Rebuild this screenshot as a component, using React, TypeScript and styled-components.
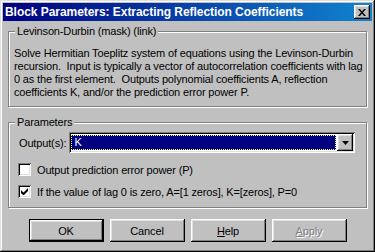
import React from "react";
import styled, { createGlobalStyle } from "styled-components";

const GlobalStyle = createGlobalStyle`
  html, body {
    margin: 0;
    padding: 0;
    background: #c0c0c0;
  }
  body {
    font-family: "Liberation Sans", Arial, sans-serif;
    font-size: 11px;
    letter-spacing: -0.15px;
    color: #000;
  }
`;

const raised = `
  box-shadow: inset -1px -1px #000, inset 1px 1px #fff, inset -2px -2px #808080, inset 2px 2px #dfdfdf;
`;

const sunken = `
  box-shadow: inset 1px 1px #808080, inset -1px -1px #fff, inset 2px 2px #000, inset -2px -2px #dfdfdf;
`;

const Window = styled.div`
  width: 375px;
  height: 252px;
  box-sizing: border-box;
  padding: 3px;
  background: #c0c0c0;
  box-shadow: inset -1px -1px #000, inset 1px 1px #dfdfdf, inset -2px -2px #808080, inset 2px 2px #fff;
  display: flex;
  flex-direction: column;
`;

const TitleBar = styled.div`
  height: 18px;
  display: flex;
  align-items: center;
  padding: 0 2px;
  background: linear-gradient(to right, #000080, #1084d0);
`;

const Title = styled.span`
  color: #fff;
  font-weight: bold;
  font-size: 12px;
  letter-spacing: -0.05px;
  white-space: nowrap;
`;

const CloseButton = styled.button`
  margin-left: auto;
  width: 16px;
  height: 14px;
  padding: 0;
  border: 0;
  background: #c0c0c0;
  ${raised}
  display: flex;
  align-items: center;
  justify-content: center;
`;

const Content = styled.div`
  display: flex;
  flex-direction: column;
  padding: 0 5px;
`;

const GroupBox = styled.fieldset<{ $top: number; $pad: string }>`
  margin: ${(p) => p.$top}px 0 0;
  padding: ${(p) => p.$pad};
  border: 1px solid #808080;
  box-shadow: inset 1px 1px #fff, 1px 1px #fff;
  min-width: 0;
`;

const Legend = styled.legend`
  padding: 0 2px;
  margin-left: 1px;
  line-height: 13px;
  background: #c0c0c0;
`;

const Description = styled.div`
  line-height: 13px;
  white-space: pre;
`;

const FieldRow = styled.div`
  display: flex;
  align-items: center;
  padding-left: 5px;
  padding-right: 6px;
`;

const FieldLabel = styled.span`
  margin-right: 3px;
  white-space: nowrap;
`;

const Combo = styled.div`
  flex: 1;
  height: 21px;
  box-sizing: border-box;
  padding: 2px;
  background: #fff;
  ${sunken}
  display: flex;
  align-items: stretch;
`;

const ComboValue = styled.div`
  flex: 1;
  margin: 1px 1px 1px 0;
  background: #000080;
  border: 1px dotted #ffff80;
  color: #fff;
  padding-left: 2px;
  line-height: 13px;
`;

const ComboArrow = styled.div`
  width: 16px;
  background: #c0c0c0;
  ${raised}
  display: flex;
  align-items: center;
  justify-content: center;
`;

const CheckList = styled.div`
  display: flex;
  flex-direction: column;
  gap: 9px;
  margin-top: 10px;
  padding-left: 4px;
`;

const CheckRow = styled.label`
  display: flex;
  align-items: center;
  gap: 6px;
  height: 13px;
  white-space: nowrap;
`;

const CheckBox = styled.span`
  width: 13px;
  height: 13px;
  box-sizing: border-box;
  background: #fff;
  ${sunken}
  display: flex;
  align-items: center;
  justify-content: center;
  flex: none;
`;

const ButtonRow = styled.div`
  display: flex;
  justify-content: center;
  gap: 6px;
  margin-top: 11px;
`;

const Button = styled.button<{ $default?: boolean; $disabled?: boolean }>`
  width: 75px;
  height: 23px;
  padding: 0;
  font-family: inherit;
  font-size: 11px;
  font-weight: normal;
  letter-spacing: inherit;
  background: #c0c0c0;
  color: ${(p) => (p.$disabled ? "#808080" : "#000")};
  text-shadow: ${(p) => (p.$disabled ? "1px 1px #fff" : "none")};
  border: ${(p) => (p.$default ? "1px solid #000" : "0")};
  ${raised}
  u {
    text-decoration: underline;
  }
`;

const CloseIcon = () => (
  <svg width="8" height="7" viewBox="0 0 8 7">
    <path d="M0 0h2l2 2.5L6 0h2L5 3.5 8 7H6L4 4.5 2 7H0l3-3.5z" fill="#000" />
  </svg>
);

const ArrowIcon = () => (
  <svg width="7" height="4" viewBox="0 0 7 4">
    <path d="M0 0h7L3.5 4z" fill="#000" />
  </svg>
);

const CheckIcon = () => (
  <svg width="7" height="7" viewBox="0 0 7 7">
    <path d="M0 2v3l2 2h1l4-4V0L2.5 4.5z" fill="#000" />
  </svg>
);

const description = [
  "Solve Hermitian Toeplitz system of equations using the Levinson-Durbin",
  "recursion.  Input is typically a vector of autocorrelation coefficients with lag",
  "0 as the first element.  Outputs polynomial coefficients A, reflection",
  "coefficients K, and/or the prediction error power P.",
];

const options = [
  { label: "Output prediction error power (P)", checked: false },
  { label: "If the value of lag 0 is zero, A=[1 zeros], K=[zeros], P=0", checked: true },
];

export default function App() {
  return (
    <>
      <GlobalStyle />
      <Window>
        <TitleBar>
          <Title>Block Parameters: Extracting Reflection Coefficients</Title>
          <CloseButton aria-label="Close">
            <CloseIcon />
          </CloseButton>
        </TitleBar>
        <Content>
          <GroupBox $top={4} $pad="9px 5px 7px 5px">
            <Legend>Levinson-Durbin (mask) (link)</Legend>
            {description.map((line, i) => (
              <Description key={i}>{line}</Description>
            ))}
          </GroupBox>
          <GroupBox $top={9} $pad="3px 5px 9px 5px">
            <Legend>Parameters</Legend>
            <FieldRow>
              <FieldLabel>Output(s):</FieldLabel>
              <Combo>
                <ComboValue>K</ComboValue>
                <ComboArrow>
                  <ArrowIcon />
                </ComboArrow>
              </Combo>
            </FieldRow>
            <CheckList>
              {options.map((opt, i) => (
                <CheckRow key={i}>
                  <CheckBox>{opt.checked && <CheckIcon />}</CheckBox>
                  <span>{opt.label}</span>
                </CheckRow>
              ))}
            </CheckList>
          </GroupBox>
          <ButtonRow>
            <Button $default>OK</Button>
            <Button>Cancel</Button>
            <Button>
              <u>H</u>elp
            </Button>
            <Button $disabled>
              <u>A</u>pply
            </Button>
          </ButtonRow>
        </Content>
      </Window>
    </>
  );
}
